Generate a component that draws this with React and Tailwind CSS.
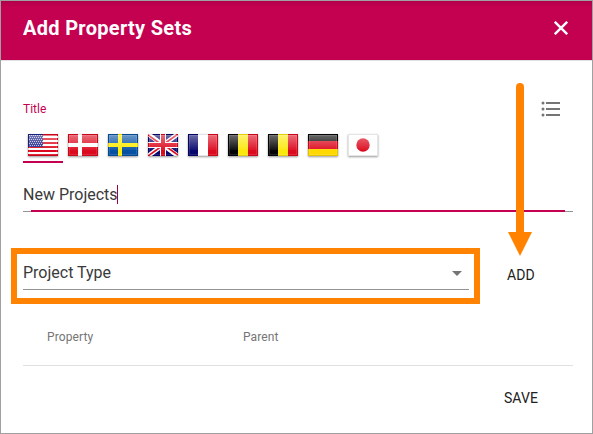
import React from "react";

const VERTICAL = { fr: ["#06066c", "#ffffff", "#dc0a1e"], be: ["#050505", "#fce80c", "#dc0a1e"] };

function FlagArt({ code }) {
  if (code === "us")
    return (
      <>
        <rect width="30" height="22" fill="#fff" />
        {[0, 4, 8, 12, 16, 20].map((y) => (
          <rect key={y} y={y} width="30" height="2" fill="#dc0a1e" />
        ))}
        <rect width="15" height="13" fill="#1c2484" />
        {[1, 3, 5, 7, 9, 11].map((y) =>
          [1, 3, 5, 7, 9, 11, 13].map((x) => (
            <rect key={x + "-" + y} x={x + (((y - 1) / 2) % 2)} y={y} width="1" height="1" fill="#b8b8dc" />
          ))
        )}
      </>
    );
  if (code === "dk")
    return (
      <>
        <rect width="30" height="22" fill="#dc0a1e" />
        <path d="M10 0h4v22h-4zM0 9h30v4H0z" fill="#fff" />
      </>
    );
  if (code === "se")
    return (
      <>
        <rect width="30" height="22" fill="#0751a2" />
        <path d="M10 0h4v22h-4zM0 9h30v4H0z" fill="#ffec00" />
      </>
    );
  if (code === "gb")
    return (
      <>
        <rect width="30" height="22" fill="#06066c" />
        <path d="M0 0L30 22M30 0L0 22" stroke="#fff" strokeWidth="4.6" />
        <path d="M0 1L14 11M30 0L16 10M0 22L14 12M30 21L16 11" stroke="#dc0a1e" strokeWidth="1.6" />
        <path d="M12 0h6v22h-6zM0 8h30v6H0z" fill="#fff" />
        <path d="M13 0h4v22h-4zM0 9h30v4H0z" fill="#dc0a1e" />
      </>
    );
  if (code === "de")
    return (
      <>
        <rect width="30" height="7" fill="#050505" />
        <rect y="7" width="30" height="8" fill="#dc0a1e" />
        <rect y="15" width="30" height="7" fill="#ffd800" />
      </>
    );
  if (code === "jp")
    return (
      <>
        <rect width="30" height="22" fill="#fff" />
        <circle cx="15" cy="11" r="6.7" fill="#dc0a1e" />
      </>
    );
  return VERTICAL[code].map((c, i) => <rect key={i} x={i * 10} width="10" height="22" fill={c} />);
}

function Flag({ code, index }) {
  const id = "gloss" + index;
  return (
    <svg width="30" height="22" viewBox="0 0 30 22" className="shadow-[0_1px_2px_rgba(0,0,0,0.4)]">
      <defs>
        <linearGradient id={id} x1="0" y1="0" x2="0" y2="1">
          <stop offset="0" stopColor="#fff" stopOpacity="0.4" />
          <stop offset="1" stopColor="#fff" stopOpacity="0.05" />
        </linearGradient>
      </defs>
      <FlagArt code={code} />
      <rect x="1" y="1" width="28" height="15" fill={"url(#" + id + ")"} />
      <rect x="0.5" y="0.5" width="29" height="21" fill="none" stroke="#000" strokeOpacity="0.1" />
      <rect x="1.5" y="1.5" width="27" height="19" fill="none" stroke="#fff" strokeOpacity="0.12" />
    </svg>
  );
}

const FLAGS = ["us", "dk", "se", "gb", "fr", "be", "be", "de", "jp"];

export default function App() {
  return (
    <div className="relative flex h-[434px] w-[593px] flex-col border border-[#a0a0a0] bg-white font-['Roboto',sans-serif] text-[#3a3a3a]">
      <header className="flex h-[60px] shrink-0 items-center justify-between border-b border-[#e0e0e0] bg-[#c40050] bg-linear-to-b from-[#b0004a] to-[#c40050] to-[6px] pr-[24px] pb-[5px] pl-[22px] text-white">
        <h1 className="text-[20px] leading-6 font-bold tracking-[0.3px]">Add Property Sets</h1>
        <svg width="14" height="14" viewBox="0 0 14 14" stroke="currentColor" strokeWidth="2.4">
          <path d="M.8.8l12.4 12.4M13.2.8L.8 13.2" />
        </svg>
      </header>
      <main className="flex flex-col px-[22px]">
        <div className="mt-[40px] flex h-4 items-center justify-between pr-[9px]">
          <label className="text-[12px] leading-4 text-[#c40050]">Title</label>
          <svg width="24" height="16" viewBox="0 0 24 16" fill="#757575">
            <circle cx="6" cy="2" r="1.5" />
            <circle cx="6" cy="8" r="1.5" />
            <circle cx="6" cy="14" r="1.5" />
            <path d="M9 1h14v2H9zM9 7h14v2H9zM9 13h14v2H9z" />
          </svg>
        </div>
        <div className="mt-[17px] flex h-[29px]">
          {FLAGS.map((code, i) => (
            <div key={i} className={"flex w-[40px] justify-center border-b-2 " + (i === 0 ? "border-[#c40050]" : "border-transparent")}>
              <Flag code={code} index={i} />
            </div>
          ))}
        </div>
        <div className="mt-[15px] flex h-[34px] flex-col">
          <div className="mt-[7px] flex h-[19px] items-center">
            <span className="text-[16px] leading-[19px]">New Projects</span>
            <span className="-ml-px h-[19px] w-px bg-[#a00044]" />
          </div>
          <div className="mt-[6px] flex h-[2px] w-[550px] items-end">
            <span className="h-px w-[8px] bg-[#949494]" />
            <span className="h-[2px] flex-1 bg-[#c40050]" />
            <span className="h-px w-[8px] bg-[#949494]" />
          </div>
        </div>
        <div className="mt-[36px] flex h-[56px] items-center">
          <div className="-ml-[12px] flex h-[56px] w-[469px] flex-col border-6 border-[#ff8200] pt-[8px] pr-[5px] pl-[6px]">
            <div className="flex h-[28px] justify-between border-b border-[#949494] pr-[7px]">
              <span className="text-[16px] leading-[21px]">Project Type</span>
              <svg className="mt-[9px]" width="10" height="5" viewBox="0 0 10 5">
                <path d="M0 0h10L5 5z" fill="#757575" />
              </svg>
            </div>
          </div>
          <button className="ml-[27px] pb-[3px] text-[14px] leading-4 font-normal tracking-[0.1px] text-[#212121]">ADD</button>
        </div>
        <div className="mt-[8px] flex h-[54px] w-[550px] border-b border-[#e0e0e0] pt-[17px] pl-[24px] text-[12px] leading-4 font-normal tracking-[0.1px] text-[#757575]">
          <span className="w-[196px]">Property</span>
          <span>Parent</span>
        </div>
        <div className="mt-[24px] flex justify-end pr-[32px]">
          <button className="text-[14px] leading-4 font-normal tracking-[0.1px] text-[#212121]">SAVE</button>
        </div>
      </main>
      <svg className="absolute top-[82px] left-[507px]" width="24" height="173" viewBox="0 0 24 173" fill="#ff8200">
        <path d="M8 4a4 4 0 0 1 8 0v145h8L12 173 0 149h8z" />
      </svg>
    </div>
  );
}
